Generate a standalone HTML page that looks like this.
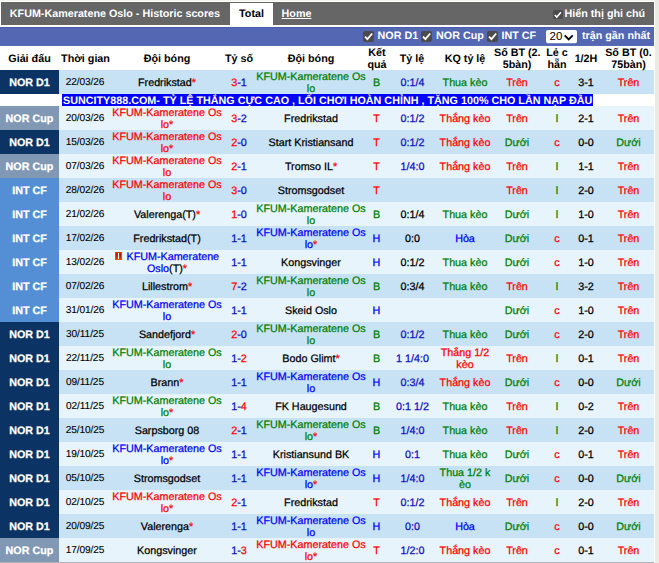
<!DOCTYPE html>
<html><head><meta charset="utf-8">
<style>
html,body{margin:0;padding:0;}
body{width:659px;height:563px;overflow:hidden;background:#ebeae3;font-family:"Liberation Sans",sans-serif;position:relative;text-rendering:geometricPrecision;}
#wrap{position:absolute;left:0;top:0;width:655px;height:563px;background:#fff;overflow:hidden;}
#tw{position:absolute;left:0;top:0;width:654px;height:563px;overflow:hidden;}
#top{position:absolute;left:1px;top:2px;width:653px;height:23px;background:#666;color:#fff;font-weight:bold;font-size:10.75px;line-height:25px;}
#top .title{position:absolute;left:8.8px;top:0;white-space:nowrap;}
#top .tab{position:absolute;left:229px;top:1px;width:43px;height:24px;background:#fff;color:#000;text-align:center;line-height:23px;}
#top .home{position:absolute;left:280.6px;top:0;text-decoration:underline;}
#top .note{position:absolute;left:563.5px;top:0;white-space:nowrap;}
.cb{position:absolute;width:11px;height:11px;background:#4b4b4b;border-radius:2px;}
.cb svg{position:absolute;left:0;top:0;width:100%;height:100%;}
#flt{position:absolute;left:0;top:27px;width:654px;height:19px;box-sizing:border-box;border-top:1px solid #4a5eae;border-bottom:1px solid #5a6db4;background:#5367b2;color:#fff;font-weight:bold;font-size:10.75px;line-height:17px;}
#flt span.i{position:absolute;top:-0.5px;white-space:nowrap;}
#flt .sel{position:absolute;left:546px;top:2px;width:31px;height:13px;background:#fff;border-radius:2px;color:#000;box-shadow:0 0.5px 0 rgba(255,255,255,0.45);}
#flt .sel b{position:absolute;left:3.5px;top:-0.5px;font-weight:normal;font-size:11.5px;line-height:14px;}
#flt .sel svg{position:absolute;left:16.6px;top:3.7px;width:11.4px;height:7.2px;}
table{position:absolute;left:0;top:47px;width:659px;border-collapse:collapse;table-layout:fixed;font-size:10.75px;}
td,th{padding:0;text-align:center;vertical-align:middle;overflow:hidden;white-space:nowrap;}
th{height:24px;padding-top:0;font-weight:bold;line-height:12px;color:#000;}
th.s{padding-top:0px;height:24px;}
tr.o,tr.e{height:24px;}
tr.o td,tr.e td{height:24px;line-height:12px;}
td div{height:24px;line-height:12px;}
td.lg{color:#fff;font-weight:bold;}
#bg div{position:absolute;height:24px;}
#bg .o{left:59px;width:595px;background:#c7e2f5;}
#bg .e{left:59px;width:595px;background:#e7f4fb;}
#bg .D1{left:0;width:59px;background:#0b3363;}
#bg .Cup{left:0;width:59px;background:#8198b4;}
#bg .CF{left:0;width:59px;background:#548fd6;}
#bg .adb{left:62px;top:94px;width:531px;height:12px;background:#0303fa;}
td.dt{font-size:10.15px;letter-spacing:-0.1px;padding-right:1px;-webkit-text-stroke:0.1px #000 !important;color:#000;}
.r{color:#f00;}.g{color:#008000;}.b{color:#0000ff;}.k{color:#000;}
td.od{color:#1010c4;}td.sc .b{color:#1010c4;}
tr.o td,tr.e td{-webkit-text-stroke:0.25px currentColor;}
td.rs{padding-right:1px;}
td.od,td.odk{padding-left:1px;}
td i{font-style:normal;color:#f00;-webkit-text-stroke:0.22px #f00 !important;}
td s{text-decoration:none;color:#000;}
tr.ad td{height:12px;overflow:visible;text-align:left;line-height:12px;}
tr.ad span{display:inline-block;margin-left:4px;position:relative;top:0px;color:#fff;font-weight:bold;font-size:10.78px;height:12px;line-height:12px;white-space:nowrap;}
u.cd{display:inline-block;width:7px;height:8px;background:linear-gradient(to bottom,#e83000 0%,#cc0800 35%,#d81800 60%,#ff5a00 100%);box-shadow:inset 1px 0 0 #f04800,inset -1px 0 0 #f04800;margin-right:4.6px;vertical-align:0px;text-decoration:none;position:relative;}
u.cd:after{content:"";position:absolute;left:3px;top:1.3px;width:1px;height:5.4px;background:#fff;box-shadow:0 0 1px #fbb;}
</style></head><body>
<div id="wrap"><div style="position:absolute;left:0;top:0;width:655px;height:1px;background:#f4f3ee"></div>
<div id="top"><span class="title">KFUM-Kameratene Oslo - Historic scores</span><span class="tab">Total</span><span class="home">Home</span><span class="cb" style="left:552px;top:7.5px;width:9.5px;height:9.5px"><svg viewBox="0 0 11 11"><path d="M2 5.7 L4.4 8.2 L9.2 2.5" fill="none" stroke="#fff" stroke-width="1.8"/></svg></span><span class="note">Hiển thị ghi chú</span></div>
<div id="flt"><span class="cb" style="left:363px;top:3px"><svg viewBox="0 0 11 11"><path d="M2 5.7 L4.4 8.2 L9.2 2.5" fill="none" stroke="#fff" stroke-width="1.8"/></svg></span><span class="i" style="left:377.5px">NOR D1</span><span class="cb" style="left:421px;top:3px"><svg viewBox="0 0 11 11"><path d="M2 5.7 L4.4 8.2 L9.2 2.5" fill="none" stroke="#fff" stroke-width="1.8"/></svg></span><span class="i" style="left:436px">NOR Cup</span><span class="cb" style="left:487px;top:3px"><svg viewBox="0 0 11 11"><path d="M2 5.7 L4.4 8.2 L9.2 2.5" fill="none" stroke="#fff" stroke-width="1.8"/></svg></span><span class="i" style="left:501.5px">INT CF</span><span class="sel"><b>20</b><svg viewBox="0 0 12 8"><path d="M1.5 1.5 L6 6 L10.5 1.5" fill="none" stroke="#000" stroke-width="2"/></svg></span><span class="i" style="left:582px">trận gần nhất</span></div>
<div style="position:absolute;left:0;top:562px;width:654px;height:1px;background:#b2b2b2"></div>
<div id="bg"><div class="o" style="top:70px"></div><div class="D1" style="top:70px"></div><div class="e" style="top:106px"></div><div class="Cup" style="top:106px"></div><div class="o" style="top:130px"></div><div class="D1" style="top:130px"></div><div class="e" style="top:154px"></div><div class="Cup" style="top:154px"></div><div class="o" style="top:178px"></div><div class="CF" style="top:178px"></div><div class="e" style="top:202px"></div><div class="CF" style="top:202px"></div><div class="o" style="top:226px"></div><div class="CF" style="top:226px"></div><div class="e" style="top:250px"></div><div class="CF" style="top:250px"></div><div class="o" style="top:274px"></div><div class="CF" style="top:274px"></div><div class="e" style="top:298px"></div><div class="CF" style="top:298px"></div><div class="o" style="top:322px"></div><div class="D1" style="top:322px"></div><div class="e" style="top:346px"></div><div class="D1" style="top:346px"></div><div class="o" style="top:370px"></div><div class="D1" style="top:370px"></div><div class="e" style="top:394px"></div><div class="D1" style="top:394px"></div><div class="o" style="top:418px"></div><div class="D1" style="top:418px"></div><div class="e" style="top:442px"></div><div class="D1" style="top:442px"></div><div class="o" style="top:466px"></div><div class="D1" style="top:466px"></div><div class="e" style="top:490px"></div><div class="D1" style="top:490px"></div><div class="o" style="top:514px"></div><div class="D1" style="top:514px"></div><div class="e" style="top:538px"></div><div class="Cup" style="top:538px"></div><div class="adb"></div></div>
<div id="tw"><table>
<colgroup><col style="width:59px"><col style="width:53px"><col style="width:110px"><col style="width:34px"><col style="width:110px"><col style="width:22px"><col style="width:48px"><col style="width:58px"><col style="width:46px"><col style="width:34px"><col style="width:24px"><col style="width:61px"></colgroup>
<tr><th class="s">Giải đấu</th><th class="s">Thời gian</th><th class="s">Đội bóng</th><th class="s">Tỷ số</th><th class="s">Đội bóng</th><th>Kết<br>quả</th><th class="s">Tỷ lệ</th><th class="s">KQ tỷ lệ</th><th>Số BT (2.<br>5bàn)</th><th>Lẻ c<br>hẵn</th><th class="s">1/2H</th><th>Số BT (0.<br>75bàn)</th></tr>
<tr class="o"><td class="lg D1">NOR D1</td><td class="dt"><span>22/03/26</span></td><td class="tm k">Fredrikstad<i>*</i></td><td class="sc"><span class="r">3</span><span class="b">-</span><span class="b">1</span></td><td class="tm g"><div>KFUM-Kameratene Os<br>lo</div></td><td class="rs g">B</td><td class="od">0:1/4</td><td class="kq g">Thua kèo</td><td class="r">Trên</td><td class="r">c</td><td class="k">3-1</td><td class="r">Trên</td></tr>
<tr class="ad"><td></td><td colspan="11"><span>SUNCITY888.COM- TỶ LỆ THẮNG CỰC CAO , LỐI CHƠI HOÀN CHỈNH , TẶNG 100% CHO LẦN NẠP ĐẦU</span></td></tr>
<tr class="e"><td class="lg Cup">NOR Cup</td><td class="dt"><span>20/03/26</span></td><td class="tm r"><div>KFUM-Kameratene Os<br>lo<i>*</i></div></td><td class="sc"><span class="r">3</span><span class="b">-</span><span class="b">2</span></td><td class="tm k">Fredrikstad</td><td class="rs r">T</td><td class="od">0:1/2</td><td class="kq r">Thắng kèo</td><td class="r">Trên</td><td class="g">l</td><td class="k">2-1</td><td class="r">Trên</td></tr>
<tr class="o"><td class="lg D1">NOR D1</td><td class="dt"><span>15/03/26</span></td><td class="tm r"><div>KFUM-Kameratene Os<br>lo<i>*</i></div></td><td class="sc"><span class="r">2</span><span class="b">-</span><span class="b">0</span></td><td class="tm k">Start Kristiansand</td><td class="rs r">T</td><td class="od">0:1/2</td><td class="kq r">Thắng kèo</td><td class="g">Dưới</td><td class="r">c</td><td class="k">0-0</td><td class="g">Dưới</td></tr>
<tr class="e"><td class="lg Cup">NOR Cup</td><td class="dt"><span>07/03/26</span></td><td class="tm r"><div>KFUM-Kameratene Os<br>lo</div></td><td class="sc"><span class="r">2</span><span class="b">-</span><span class="b">1</span></td><td class="tm k">Tromso IL<i>*</i></td><td class="rs r">T</td><td class="od">1/4:0</td><td class="kq r">Thắng kèo</td><td class="r">Trên</td><td class="g">l</td><td class="k">1-1</td><td class="r">Trên</td></tr>
<tr class="o"><td class="lg CF">INT CF</td><td class="dt"><span>28/02/26</span></td><td class="tm r"><div>KFUM-Kameratene Os<br>lo</div></td><td class="sc"><span class="r">3</span><span class="b">-</span><span class="b">0</span></td><td class="tm k">Stromsgodset</td><td class="rs r">T</td><td class="odk k"></td><td class="kq "></td><td class="r">Trên</td><td class="g">l</td><td class="k">2-0</td><td class="r">Trên</td></tr>
<tr class="e"><td class="lg CF">INT CF</td><td class="dt"><span>21/02/26</span></td><td class="tm k">Valerenga(T)<i>*</i></td><td class="sc"><span class="r">1</span><span class="b">-</span><span class="b">0</span></td><td class="tm g"><div>KFUM-Kameratene Os<br>lo</div></td><td class="rs g">B</td><td class="odk k">0:1/4</td><td class="kq g">Thua kèo</td><td class="g">Dưới</td><td class="g">l</td><td class="k">1-0</td><td class="r">Trên</td></tr>
<tr class="o"><td class="lg CF">INT CF</td><td class="dt"><span>17/02/26</span></td><td class="tm k">Fredrikstad(T)</td><td class="sc"><span class="b">1</span><span class="b">-</span><span class="b">1</span></td><td class="tm b"><div>KFUM-Kameratene Os<br>lo<i>*</i></div></td><td class="rs b">H</td><td class="odk k">0:0</td><td class="kq b">Hòa</td><td class="g">Dưới</td><td class="r">c</td><td class="k">0-1</td><td class="r">Trên</td></tr>
<tr class="e"><td class="lg CF">INT CF</td><td class="dt"><span>13/02/26</span></td><td class="tm b"><div><u class="cd"></u>KFUM-Kameratene<br>Oslo<s>(T)</s><i>*</i></div></td><td class="sc"><span class="b">1</span><span class="b">-</span><span class="b">1</span></td><td class="tm k">Kongsvinger</td><td class="rs b">H</td><td class="odk k">0:1/2</td><td class="kq g">Thua kèo</td><td class="g">Dưới</td><td class="r">c</td><td class="k">1-0</td><td class="r">Trên</td></tr>
<tr class="o"><td class="lg CF">INT CF</td><td class="dt"><span>07/02/26</span></td><td class="tm k">Lillestrom<i>*</i></td><td class="sc"><span class="r">7</span><span class="b">-</span><span class="b">2</span></td><td class="tm g"><div>KFUM-Kameratene Os<br>lo</div></td><td class="rs g">B</td><td class="odk k">0:3/4</td><td class="kq g">Thua kèo</td><td class="r">Trên</td><td class="g">l</td><td class="k">3-2</td><td class="r">Trên</td></tr>
<tr class="e"><td class="lg CF">INT CF</td><td class="dt"><span>31/01/26</span></td><td class="tm b"><div>KFUM-Kameratene Os<br>lo</div></td><td class="sc"><span class="b">1</span><span class="b">-</span><span class="b">1</span></td><td class="tm k">Skeid Oslo</td><td class="rs b">H</td><td class="odk k"></td><td class="kq "></td><td class="g">Dưới</td><td class="r">c</td><td class="k">1-0</td><td class="r">Trên</td></tr>
<tr class="o"><td class="lg D1">NOR D1</td><td class="dt"><span>30/11/25</span></td><td class="tm k">Sandefjord<i>*</i></td><td class="sc"><span class="r">2</span><span class="b">-</span><span class="b">0</span></td><td class="tm g"><div>KFUM-Kameratene Os<br>lo</div></td><td class="rs g">B</td><td class="od">0:1/2</td><td class="kq g">Thua kèo</td><td class="g">Dưới</td><td class="r">c</td><td class="k">2-0</td><td class="r">Trên</td></tr>
<tr class="e"><td class="lg D1">NOR D1</td><td class="dt"><span>22/11/25</span></td><td class="tm g"><div>KFUM-Kameratene Os<br>lo</div></td><td class="sc"><span class="b">1</span><span class="b">-</span><span class="r">2</span></td><td class="tm k">Bodo Glimt<i>*</i></td><td class="rs g">B</td><td class="od">1 1/4:0</td><td class="kq r"><div>Thắng 1/2<br>kèo</div></td><td class="r">Trên</td><td class="g">l</td><td class="k">0-1</td><td class="r">Trên</td></tr>
<tr class="o"><td class="lg D1">NOR D1</td><td class="dt"><span>09/11/25</span></td><td class="tm k">Brann<i>*</i></td><td class="sc"><span class="b">1</span><span class="b">-</span><span class="b">1</span></td><td class="tm b"><div>KFUM-Kameratene Os<br>lo</div></td><td class="rs b">H</td><td class="od">0:3/4</td><td class="kq r">Thắng kèo</td><td class="g">Dưới</td><td class="r">c</td><td class="k">0-0</td><td class="g">Dưới</td></tr>
<tr class="e"><td class="lg D1">NOR D1</td><td class="dt"><span>02/11/25</span></td><td class="tm g"><div>KFUM-Kameratene Os<br>lo<i>*</i></div></td><td class="sc"><span class="b">1</span><span class="b">-</span><span class="r">4</span></td><td class="tm k">FK Haugesund</td><td class="rs g">B</td><td class="od">0:1 1/2</td><td class="kq g">Thua kèo</td><td class="r">Trên</td><td class="g">l</td><td class="k">0-2</td><td class="r">Trên</td></tr>
<tr class="o"><td class="lg D1">NOR D1</td><td class="dt"><span>25/10/25</span></td><td class="tm k">Sarpsborg 08</td><td class="sc"><span class="r">2</span><span class="b">-</span><span class="b">1</span></td><td class="tm g"><div>KFUM-Kameratene Os<br>lo<i>*</i></div></td><td class="rs g">B</td><td class="od">1/4:0</td><td class="kq g">Thua kèo</td><td class="r">Trên</td><td class="g">l</td><td class="k">2-0</td><td class="r">Trên</td></tr>
<tr class="e"><td class="lg D1">NOR D1</td><td class="dt"><span>19/10/25</span></td><td class="tm b"><div>KFUM-Kameratene Os<br>lo<i>*</i></div></td><td class="sc"><span class="b">1</span><span class="b">-</span><span class="b">1</span></td><td class="tm k">Kristiansund BK</td><td class="rs b">H</td><td class="od">0:1</td><td class="kq g">Thua kèo</td><td class="g">Dưới</td><td class="r">c</td><td class="k">0-1</td><td class="r">Trên</td></tr>
<tr class="o"><td class="lg D1">NOR D1</td><td class="dt"><span>05/10/25</span></td><td class="tm k">Stromsgodset</td><td class="sc"><span class="b">1</span><span class="b">-</span><span class="b">1</span></td><td class="tm b"><div>KFUM-Kameratene Os<br>lo<i>*</i></div></td><td class="rs b">H</td><td class="od">1/4:0</td><td class="kq g"><div>Thua 1/2 k<br>èo</div></td><td class="g">Dưới</td><td class="r">c</td><td class="k">0-0</td><td class="g">Dưới</td></tr>
<tr class="e"><td class="lg D1">NOR D1</td><td class="dt"><span>02/10/25</span></td><td class="tm r"><div>KFUM-Kameratene Os<br>lo<i>*</i></div></td><td class="sc"><span class="r">2</span><span class="b">-</span><span class="b">1</span></td><td class="tm k">Fredrikstad</td><td class="rs r">T</td><td class="od">0:1/2</td><td class="kq r">Thắng kèo</td><td class="r">Trên</td><td class="g">l</td><td class="k">2-0</td><td class="r">Trên</td></tr>
<tr class="o"><td class="lg D1">NOR D1</td><td class="dt"><span>20/09/25</span></td><td class="tm k">Valerenga<i>*</i></td><td class="sc"><span class="b">1</span><span class="b">-</span><span class="b">1</span></td><td class="tm b"><div>KFUM-Kameratene Os<br>lo</div></td><td class="rs b">H</td><td class="od">0:0</td><td class="kq b">Hòa</td><td class="g">Dưới</td><td class="r">c</td><td class="k">0-0</td><td class="g">Dưới</td></tr>
<tr class="e"><td class="lg Cup">NOR Cup</td><td class="dt"><span>17/09/25</span></td><td class="tm k">Kongsvinger</td><td class="sc"><span class="b">1</span><span class="b">-</span><span class="r">3</span></td><td class="tm r"><div>KFUM-Kameratene Os<br>lo<i>*</i></div></td><td class="rs r">T</td><td class="od">1/2:0</td><td class="kq r">Thắng kèo</td><td class="r">Trên</td><td class="r">c</td><td class="k">0-1</td><td class="r">Trên</td></tr>
</table></div>
</div>
</body></html>
